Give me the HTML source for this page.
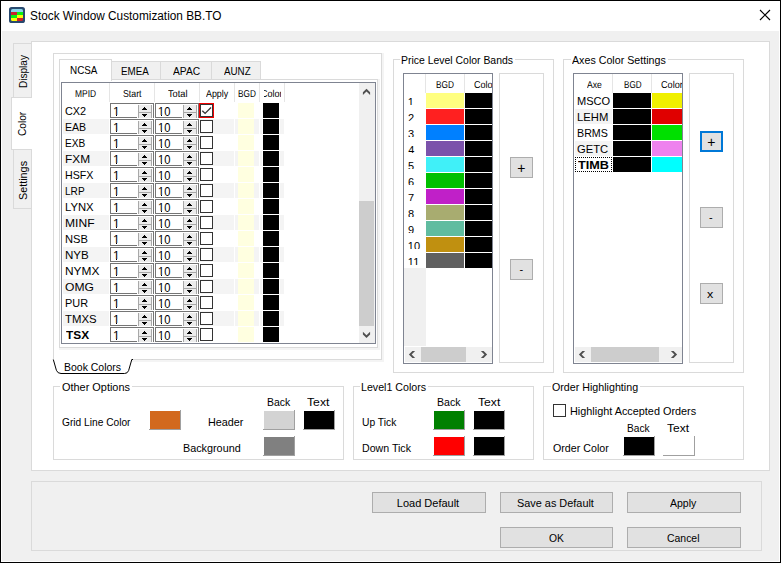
<!DOCTYPE html>
<html lang="en"><head><meta charset="utf-8"><title>Stock Window Customization BB.TO</title>
<style>
html,body{margin:0;padding:0;}
body{width:781px;height:563px;overflow:hidden;position:relative;background:#f0f0f0;font-family:"Liberation Sans",sans-serif;font-size:11px;color:#000;}
div,span,svg{position:absolute;box-sizing:border-box;}
.t{white-space:nowrap;transform-origin:0 0;}
.btn{background:#e1e1e1;border:1px solid #adadad;}
.sw{width:32px;height:20px;background:linear-gradient(#fff,#fff) 0 0/31px 19px no-repeat #a0a0a0;}
.sw i{position:absolute;display:block;left:1px;top:1px;width:30px;height:18px;}
.sp{width:44px;height:15px;background:#fff;border:1px solid #757575;}
.sp i{position:absolute;display:block;box-sizing:border-box;}
.sp .a{left:26px;top:13px;width:16px;height:1px;background:#fff;}
.sp .b{left:27px;top:1px;width:14px;height:13px;background:#ececec;border-left:1px solid #a8a8a8;border-right:1px solid #a8a8a8;}
.sp .c{left:28px;top:8px;width:12px;height:1px;background:#a8a8a8;}
.sp svg{left:30px;top:3px;}
.cb{width:13px;height:13px;background:#fff;border:1px solid #333;}
.v{font-size:12px;line-height:14px;}
.ft{height:1px;background:#fff;}
</style></head><body>

<div style="left:0px;top:0px;width:781px;height:563px;background:#000;"></div>
<div style="left:1px;top:1px;width:779px;height:561px;background:#fff;"></div>
<div style="left:2px;top:31px;width:777px;height:530px;background:#f0f0f0;"></div>
<svg style="left:9px;top:7px" width="16" height="16" viewBox="0 0 16 16">
<defs><clipPath id="ic"><rect x="2" y="2" width="12" height="12" rx="1.6"/></clipPath></defs>
<rect x="0" y="0" width="16" height="16" rx="2.6" fill="#28496f"/>
<g clip-path="url(#ic)">
<rect x="2" y="2" width="12" height="3" fill="#8ad3ea"/>
<rect x="2" y="5" width="6" height="3" fill="#cc2229"/><rect x="8" y="5" width="6" height="3" fill="#0cf014"/>
<rect x="2" y="8" width="6" height="3" fill="#08f510"/><rect x="8" y="8" width="6" height="3" fill="#fbfb08"/>
<rect x="2" y="11" width="6" height="3" fill="#fbfb08"/><rect x="8" y="11" width="6" height="3" fill="#cc2229"/>
</g></svg>
<div class="t" style="left:29.71px;top:9px;font-size:12px;line-height:14px;transform:scaleX(0.984);">Stock Window Customization BB.TO</div>
<svg style="left:759px;top:9px" width="12" height="12" viewBox="0 0 12 12"><path d="M1 1 L11 11 M11 1 L1 11" stroke="#000" stroke-width="1.15" fill="none"/></svg>
<div style="left:31px;top:41px;width:739px;height:430px;background:#fff;border:1px solid #dadada;"></div>
<div style="left:13px;top:43px;width:19px;height:55px;background:#f0f0f0;border:1px solid #dadada;"></div>
<div style="left:13px;top:149px;width:19px;height:60px;background:#f0f0f0;border:1px solid #dadada;"></div>
<div style="left:11px;top:97px;width:21px;height:53px;background:#fff;border:1px solid #dadada;border-right:none;"></div>
<div class="t" style="left:17px;top:87.81px;font-size:11px;line-height:13px;transform:rotate(-90deg) scaleX(0.914);">Display</div>
<div class="t" style="left:16px;top:136.26px;font-size:11px;line-height:13px;transform:rotate(-90deg) scaleX(0.92);">Color</div>
<div class="t" style="left:17px;top:199.59px;font-size:11px;line-height:13px;transform:rotate(-90deg) scaleX(0.982);">Settings</div>
<div style="left:53px;top:53px;width:331px;height:309px;background:#f4f4f4;"></div>
<div style="left:53px;top:53px;width:329px;height:307px;background:#fff;border:1px solid #dadada;"></div>
<div style="left:59px;top:79px;width:321px;height:271px;background:#f4f4f4;"></div>
<div style="left:59px;top:79px;width:319px;height:269px;background:#fff;border:1px solid #dadada;"></div>
<div style="left:111px;top:61px;width:50px;height:19px;background:#f0f0f0;border:1px solid #dadada;"></div>
<div class="t" style="left:120.51px;top:65px;font-size:11px;line-height:13px;transform:scaleX(0.893);">EMEA</div>
<div style="left:160px;top:61px;width:52px;height:19px;background:#f0f0f0;border:1px solid #dadada;"></div>
<div class="t" style="left:172.6px;top:65px;font-size:11px;line-height:13px;transform:scaleX(0.932);">APAC</div>
<div style="left:211px;top:61px;width:50px;height:19px;background:#f0f0f0;border:1px solid #dadada;"></div>
<div class="t" style="left:223.6px;top:65px;font-size:11px;line-height:13px;transform:scaleX(0.891);">AUNZ</div>
<div style="left:59px;top:59px;width:53px;height:22px;background:#fff;border:1px solid #dadada;border-bottom:none;"></div>
<div class="t" style="left:69.6px;top:64px;font-size:11px;line-height:13px;transform:scaleX(0.898);">NCSA</div>
<div style="left:61px;top:82px;width:315px;height:262px;background:#fff;border:1px solid #7f8491;"></div>
<div style="left:109px;top:83px;width:1px;height:19px;background:#e5e5e5;"></div>
<div style="left:154px;top:83px;width:1px;height:19px;background:#e5e5e5;"></div>
<div style="left:199px;top:83px;width:1px;height:19px;background:#e5e5e5;"></div>
<div style="left:234px;top:83px;width:1px;height:19px;background:#e5e5e5;"></div>
<div style="left:259px;top:83px;width:1px;height:19px;background:#e5e5e5;"></div>
<div style="left:284px;top:83px;width:1px;height:19px;background:#e5e5e5;"></div>
<div class="t" style="left:75.17px;top:89px;font-size:10px;line-height:12px;text-rendering:geometricPrecision;transform:scaleX(0.842);">MPID</div>
<div class="t" style="left:123.16px;top:89px;font-size:10px;line-height:12px;text-rendering:geometricPrecision;transform:scaleX(0.878);">Start</div>
<div class="t" style="left:168.17px;top:89px;font-size:10px;line-height:12px;text-rendering:geometricPrecision;transform:scaleX(0.923);">Total</div>
<div class="t" style="left:206px;top:89px;font-size:10px;line-height:12px;text-rendering:geometricPrecision;transform:scaleX(0.888);">Apply</div>
<div class="t" style="left:238.48px;top:89px;font-size:10px;line-height:12px;text-rendering:geometricPrecision;transform:scaleX(0.824);">BGD</div>
<div style="left:263.5px;top:83px;width:17.3px;height:19px;overflow:hidden;">
<div class="t" style="left:-2.45px;top:6px;font-size:10px;line-height:12px;text-rendering:geometricPrecision;transform:scaleX(0.903);">Color</div></div>
<div class="t" style="left:65.01px;top:105px;font-size:11px;line-height:13px;transform:scaleX(0.988);">CX2</div>
<div class="sp" style="left:110px;top:103px"><i class="a"></i><i class="b"></i><i class="c"></i><svg width="7" height="10" viewBox="0 0 7 10" shape-rendering="crispEdges"><path d="M3 0h1v1h1v1h1v1h-5v-1h1v-1h1z M1 7h5v1h-1v1h-1v1h-1v-1h-1v-1h-1z" fill="#000"/></svg></div>
<div class="t v" style="left:113.0px;top:105px">1</div>
<div class="ft" style="left:112px;top:115px;width:4px"></div><div class="ft" style="left:117px;top:115px;width:3px"></div>
<div class="sp" style="left:155px;top:103px"><i class="a"></i><i class="b"></i><i class="c"></i><svg width="7" height="10" viewBox="0 0 7 10" shape-rendering="crispEdges"><path d="M3 0h1v1h1v1h1v1h-5v-1h1v-1h1z M1 7h5v1h-1v1h-1v1h-1v-1h-1v-1h-1z" fill="#000"/></svg></div>
<div class="t v" style="left:158.0px;top:105px;transform:scaleX(0.93)">10</div>
<div class="ft" style="left:157px;top:115px;width:4px"></div><div class="ft" style="left:162px;top:115px;width:2px"></div>
<div style="left:199px;top:103px;width:15px;height:15px;background:#fff;border:1px solid #f00000;"></div>
<div style="left:200px;top:104px;width:13px;height:13px;background:#fff;border:1px solid #333;"></div>
<svg style="left:201px;top:105px" width="11" height="11" viewBox="0 0 11 11"><path d="M1.3 5.7 L4.1 8.4 L10 2.5" stroke="#333" stroke-width="1.3" fill="none"/></svg>
<div style="left:238px;top:103px;width:16px;height:15px;background:#ffffe0;"></div>
<div style="left:262px;top:103px;width:18px;height:15px;background:#fff;"></div>
<div style="left:263px;top:103px;width:16px;height:15px;background:#000;"></div>
<div style="left:63px;top:119px;width:46px;height:15px;background:#f4f4f4;"></div>
<div style="left:200px;top:119px;width:34px;height:15px;background:#f4f4f4;"></div>
<div style="left:235px;top:119px;width:24px;height:15px;background:#f4f4f4;"></div>
<div style="left:260px;top:119px;width:24px;height:15px;background:#f4f4f4;"></div>
<div class="t" style="left:64.54px;top:121px;font-size:11px;line-height:13px;transform:scaleX(0.961);">EAB</div>
<div class="sp" style="left:110px;top:119px"><i class="a"></i><i class="b"></i><i class="c"></i><svg width="7" height="10" viewBox="0 0 7 10" shape-rendering="crispEdges"><path d="M3 0h1v1h1v1h1v1h-5v-1h1v-1h1z M1 7h5v1h-1v1h-1v1h-1v-1h-1v-1h-1z" fill="#000"/></svg></div>
<div class="t v" style="left:113.0px;top:121px">1</div>
<div class="ft" style="left:112px;top:131px;width:4px"></div><div class="ft" style="left:117px;top:131px;width:3px"></div>
<div class="sp" style="left:155px;top:119px"><i class="a"></i><i class="b"></i><i class="c"></i><svg width="7" height="10" viewBox="0 0 7 10" shape-rendering="crispEdges"><path d="M3 0h1v1h1v1h1v1h-5v-1h1v-1h1z M1 7h5v1h-1v1h-1v1h-1v-1h-1v-1h-1z" fill="#000"/></svg></div>
<div class="t v" style="left:158.0px;top:121px;transform:scaleX(0.93)">10</div>
<div class="ft" style="left:157px;top:131px;width:4px"></div><div class="ft" style="left:162px;top:131px;width:2px"></div>
<div class="cb" style="left:200px;top:120px"></div>
<div style="left:238px;top:119px;width:16px;height:15px;background:#ffffe0;"></div>
<div style="left:262px;top:119px;width:18px;height:15px;background:#fff;"></div>
<div style="left:263px;top:119px;width:16px;height:15px;background:#000;"></div>
<div class="t" style="left:64.58px;top:137px;font-size:11px;line-height:13px;transform:scaleX(0.922);">EXB</div>
<div class="sp" style="left:110px;top:135px"><i class="a"></i><i class="b"></i><i class="c"></i><svg width="7" height="10" viewBox="0 0 7 10" shape-rendering="crispEdges"><path d="M3 0h1v1h1v1h1v1h-5v-1h1v-1h1z M1 7h5v1h-1v1h-1v1h-1v-1h-1v-1h-1z" fill="#000"/></svg></div>
<div class="t v" style="left:113.0px;top:137px">1</div>
<div class="ft" style="left:112px;top:147px;width:4px"></div><div class="ft" style="left:117px;top:147px;width:3px"></div>
<div class="sp" style="left:155px;top:135px"><i class="a"></i><i class="b"></i><i class="c"></i><svg width="7" height="10" viewBox="0 0 7 10" shape-rendering="crispEdges"><path d="M3 0h1v1h1v1h1v1h-5v-1h1v-1h1z M1 7h5v1h-1v1h-1v1h-1v-1h-1v-1h-1z" fill="#000"/></svg></div>
<div class="t v" style="left:158.0px;top:137px;transform:scaleX(0.93)">10</div>
<div class="ft" style="left:157px;top:147px;width:4px"></div><div class="ft" style="left:162px;top:147px;width:2px"></div>
<div class="cb" style="left:200px;top:136px"></div>
<div style="left:238px;top:135px;width:16px;height:15px;background:#ffffe0;"></div>
<div style="left:262px;top:135px;width:18px;height:15px;background:#fff;"></div>
<div style="left:263px;top:135px;width:16px;height:15px;background:#000;"></div>
<div style="left:63px;top:151px;width:46px;height:15px;background:#f4f4f4;"></div>
<div style="left:200px;top:151px;width:34px;height:15px;background:#f4f4f4;"></div>
<div style="left:235px;top:151px;width:24px;height:15px;background:#f4f4f4;"></div>
<div style="left:260px;top:151px;width:24px;height:15px;background:#f4f4f4;"></div>
<div class="t" style="left:64.62px;top:153px;font-size:11px;line-height:13px;transform:scaleX(1.078);">FXM</div>
<div class="sp" style="left:110px;top:151px"><i class="a"></i><i class="b"></i><i class="c"></i><svg width="7" height="10" viewBox="0 0 7 10" shape-rendering="crispEdges"><path d="M3 0h1v1h1v1h1v1h-5v-1h1v-1h1z M1 7h5v1h-1v1h-1v1h-1v-1h-1v-1h-1z" fill="#000"/></svg></div>
<div class="t v" style="left:113.0px;top:153px">1</div>
<div class="ft" style="left:112px;top:163px;width:4px"></div><div class="ft" style="left:117px;top:163px;width:3px"></div>
<div class="sp" style="left:155px;top:151px"><i class="a"></i><i class="b"></i><i class="c"></i><svg width="7" height="10" viewBox="0 0 7 10" shape-rendering="crispEdges"><path d="M3 0h1v1h1v1h1v1h-5v-1h1v-1h1z M1 7h5v1h-1v1h-1v1h-1v-1h-1v-1h-1z" fill="#000"/></svg></div>
<div class="t v" style="left:158.0px;top:153px;transform:scaleX(0.93)">10</div>
<div class="ft" style="left:157px;top:163px;width:4px"></div><div class="ft" style="left:162px;top:163px;width:2px"></div>
<div class="cb" style="left:200px;top:152px"></div>
<div style="left:238px;top:151px;width:16px;height:15px;background:#ffffe0;"></div>
<div style="left:262px;top:151px;width:18px;height:15px;background:#fff;"></div>
<div style="left:263px;top:151px;width:16px;height:15px;background:#000;"></div>
<div class="t" style="left:64.53px;top:169px;font-size:11px;line-height:13px;transform:scaleX(0.971);">HSFX</div>
<div class="sp" style="left:110px;top:167px"><i class="a"></i><i class="b"></i><i class="c"></i><svg width="7" height="10" viewBox="0 0 7 10" shape-rendering="crispEdges"><path d="M3 0h1v1h1v1h1v1h-5v-1h1v-1h1z M1 7h5v1h-1v1h-1v1h-1v-1h-1v-1h-1z" fill="#000"/></svg></div>
<div class="t v" style="left:113.0px;top:169px">1</div>
<div class="ft" style="left:112px;top:179px;width:4px"></div><div class="ft" style="left:117px;top:179px;width:3px"></div>
<div class="sp" style="left:155px;top:167px"><i class="a"></i><i class="b"></i><i class="c"></i><svg width="7" height="10" viewBox="0 0 7 10" shape-rendering="crispEdges"><path d="M3 0h1v1h1v1h1v1h-5v-1h1v-1h1z M1 7h5v1h-1v1h-1v1h-1v-1h-1v-1h-1z" fill="#000"/></svg></div>
<div class="t v" style="left:158.0px;top:169px;transform:scaleX(0.93)">10</div>
<div class="ft" style="left:157px;top:179px;width:4px"></div><div class="ft" style="left:162px;top:179px;width:2px"></div>
<div class="cb" style="left:200px;top:168px"></div>
<div style="left:238px;top:167px;width:16px;height:15px;background:#ffffe0;"></div>
<div style="left:262px;top:167px;width:18px;height:15px;background:#fff;"></div>
<div style="left:263px;top:167px;width:16px;height:15px;background:#000;"></div>
<div style="left:63px;top:183px;width:46px;height:15px;background:#f4f4f4;"></div>
<div style="left:200px;top:183px;width:34px;height:15px;background:#f4f4f4;"></div>
<div style="left:235px;top:183px;width:24px;height:15px;background:#f4f4f4;"></div>
<div style="left:260px;top:183px;width:24px;height:15px;background:#f4f4f4;"></div>
<div class="t" style="left:64.58px;top:185px;font-size:11px;line-height:13px;transform:scaleX(0.916);">LRP</div>
<div class="sp" style="left:110px;top:183px"><i class="a"></i><i class="b"></i><i class="c"></i><svg width="7" height="10" viewBox="0 0 7 10" shape-rendering="crispEdges"><path d="M3 0h1v1h1v1h1v1h-5v-1h1v-1h1z M1 7h5v1h-1v1h-1v1h-1v-1h-1v-1h-1z" fill="#000"/></svg></div>
<div class="t v" style="left:113.0px;top:185px">1</div>
<div class="ft" style="left:112px;top:195px;width:4px"></div><div class="ft" style="left:117px;top:195px;width:3px"></div>
<div class="sp" style="left:155px;top:183px"><i class="a"></i><i class="b"></i><i class="c"></i><svg width="7" height="10" viewBox="0 0 7 10" shape-rendering="crispEdges"><path d="M3 0h1v1h1v1h1v1h-5v-1h1v-1h1z M1 7h5v1h-1v1h-1v1h-1v-1h-1v-1h-1z" fill="#000"/></svg></div>
<div class="t v" style="left:158.0px;top:185px;transform:scaleX(0.93)">10</div>
<div class="ft" style="left:157px;top:195px;width:4px"></div><div class="ft" style="left:162px;top:195px;width:2px"></div>
<div class="cb" style="left:200px;top:184px"></div>
<div style="left:238px;top:183px;width:16px;height:15px;background:#ffffe0;"></div>
<div style="left:262px;top:183px;width:18px;height:15px;background:#fff;"></div>
<div style="left:263px;top:183px;width:16px;height:15px;background:#000;"></div>
<div class="t" style="left:64.67px;top:201px;font-size:11px;line-height:13px;transform:scaleX(1.026);">LYNX</div>
<div class="sp" style="left:110px;top:199px"><i class="a"></i><i class="b"></i><i class="c"></i><svg width="7" height="10" viewBox="0 0 7 10" shape-rendering="crispEdges"><path d="M3 0h1v1h1v1h1v1h-5v-1h1v-1h1z M1 7h5v1h-1v1h-1v1h-1v-1h-1v-1h-1z" fill="#000"/></svg></div>
<div class="t v" style="left:113.0px;top:201px">1</div>
<div class="ft" style="left:112px;top:211px;width:4px"></div><div class="ft" style="left:117px;top:211px;width:3px"></div>
<div class="sp" style="left:155px;top:199px"><i class="a"></i><i class="b"></i><i class="c"></i><svg width="7" height="10" viewBox="0 0 7 10" shape-rendering="crispEdges"><path d="M3 0h1v1h1v1h1v1h-5v-1h1v-1h1z M1 7h5v1h-1v1h-1v1h-1v-1h-1v-1h-1z" fill="#000"/></svg></div>
<div class="t v" style="left:158.0px;top:201px;transform:scaleX(0.93)">10</div>
<div class="ft" style="left:157px;top:211px;width:4px"></div><div class="ft" style="left:162px;top:211px;width:2px"></div>
<div class="cb" style="left:200px;top:200px"></div>
<div style="left:238px;top:199px;width:16px;height:15px;background:#ffffe0;"></div>
<div style="left:262px;top:199px;width:18px;height:15px;background:#fff;"></div>
<div style="left:263px;top:199px;width:16px;height:15px;background:#000;"></div>
<div style="left:63px;top:215px;width:46px;height:15px;background:#f4f4f4;"></div>
<div style="left:200px;top:215px;width:34px;height:15px;background:#f4f4f4;"></div>
<div style="left:235px;top:215px;width:24px;height:15px;background:#f4f4f4;"></div>
<div style="left:260px;top:215px;width:24px;height:15px;background:#f4f4f4;"></div>
<div class="t" style="left:64.6px;top:217px;font-size:11px;line-height:13px;transform:scaleX(1.098);">MINF</div>
<div class="sp" style="left:110px;top:215px"><i class="a"></i><i class="b"></i><i class="c"></i><svg width="7" height="10" viewBox="0 0 7 10" shape-rendering="crispEdges"><path d="M3 0h1v1h1v1h1v1h-5v-1h1v-1h1z M1 7h5v1h-1v1h-1v1h-1v-1h-1v-1h-1z" fill="#000"/></svg></div>
<div class="t v" style="left:113.0px;top:217px">1</div>
<div class="ft" style="left:112px;top:227px;width:4px"></div><div class="ft" style="left:117px;top:227px;width:3px"></div>
<div class="sp" style="left:155px;top:215px"><i class="a"></i><i class="b"></i><i class="c"></i><svg width="7" height="10" viewBox="0 0 7 10" shape-rendering="crispEdges"><path d="M3 0h1v1h1v1h1v1h-5v-1h1v-1h1z M1 7h5v1h-1v1h-1v1h-1v-1h-1v-1h-1z" fill="#000"/></svg></div>
<div class="t v" style="left:158.0px;top:217px;transform:scaleX(0.93)">10</div>
<div class="ft" style="left:157px;top:227px;width:4px"></div><div class="ft" style="left:162px;top:227px;width:2px"></div>
<div class="cb" style="left:200px;top:216px"></div>
<div style="left:238px;top:215px;width:16px;height:15px;background:#ffffe0;"></div>
<div style="left:262px;top:215px;width:18px;height:15px;background:#fff;"></div>
<div style="left:263px;top:215px;width:16px;height:15px;background:#000;"></div>
<div class="t" style="left:64.69px;top:233px;font-size:11px;line-height:13px;transform:scaleX(1.014);">NSB</div>
<div class="sp" style="left:110px;top:231px"><i class="a"></i><i class="b"></i><i class="c"></i><svg width="7" height="10" viewBox="0 0 7 10" shape-rendering="crispEdges"><path d="M3 0h1v1h1v1h1v1h-5v-1h1v-1h1z M1 7h5v1h-1v1h-1v1h-1v-1h-1v-1h-1z" fill="#000"/></svg></div>
<div class="t v" style="left:113.0px;top:233px">1</div>
<div class="ft" style="left:112px;top:243px;width:4px"></div><div class="ft" style="left:117px;top:243px;width:3px"></div>
<div class="sp" style="left:155px;top:231px"><i class="a"></i><i class="b"></i><i class="c"></i><svg width="7" height="10" viewBox="0 0 7 10" shape-rendering="crispEdges"><path d="M3 0h1v1h1v1h1v1h-5v-1h1v-1h1z M1 7h5v1h-1v1h-1v1h-1v-1h-1v-1h-1z" fill="#000"/></svg></div>
<div class="t v" style="left:158.0px;top:233px;transform:scaleX(0.93)">10</div>
<div class="ft" style="left:157px;top:243px;width:4px"></div><div class="ft" style="left:162px;top:243px;width:2px"></div>
<div class="cb" style="left:200px;top:232px"></div>
<div style="left:238px;top:231px;width:16px;height:15px;background:#ffffe0;"></div>
<div style="left:262px;top:231px;width:18px;height:15px;background:#fff;"></div>
<div style="left:263px;top:231px;width:16px;height:15px;background:#000;"></div>
<div style="left:63px;top:247px;width:46px;height:15px;background:#f4f4f4;"></div>
<div style="left:200px;top:247px;width:34px;height:15px;background:#f4f4f4;"></div>
<div style="left:235px;top:247px;width:24px;height:15px;background:#f4f4f4;"></div>
<div style="left:260px;top:247px;width:24px;height:15px;background:#f4f4f4;"></div>
<div class="t" style="left:64.65px;top:249px;font-size:11px;line-height:13px;transform:scaleX(1.052);">NYB</div>
<div class="sp" style="left:110px;top:247px"><i class="a"></i><i class="b"></i><i class="c"></i><svg width="7" height="10" viewBox="0 0 7 10" shape-rendering="crispEdges"><path d="M3 0h1v1h1v1h1v1h-5v-1h1v-1h1z M1 7h5v1h-1v1h-1v1h-1v-1h-1v-1h-1z" fill="#000"/></svg></div>
<div class="t v" style="left:113.0px;top:249px">1</div>
<div class="ft" style="left:112px;top:259px;width:4px"></div><div class="ft" style="left:117px;top:259px;width:3px"></div>
<div class="sp" style="left:155px;top:247px"><i class="a"></i><i class="b"></i><i class="c"></i><svg width="7" height="10" viewBox="0 0 7 10" shape-rendering="crispEdges"><path d="M3 0h1v1h1v1h1v1h-5v-1h1v-1h1z M1 7h5v1h-1v1h-1v1h-1v-1h-1v-1h-1z" fill="#000"/></svg></div>
<div class="t v" style="left:158.0px;top:249px;transform:scaleX(0.93)">10</div>
<div class="ft" style="left:157px;top:259px;width:4px"></div><div class="ft" style="left:162px;top:259px;width:2px"></div>
<div class="cb" style="left:200px;top:248px"></div>
<div style="left:238px;top:247px;width:16px;height:15px;background:#ffffe0;"></div>
<div style="left:262px;top:247px;width:18px;height:15px;background:#fff;"></div>
<div style="left:263px;top:247px;width:16px;height:15px;background:#000;"></div>
<div class="t" style="left:64.62px;top:265px;font-size:11px;line-height:13px;transform:scaleX(1.082);">NYMX</div>
<div class="sp" style="left:110px;top:263px"><i class="a"></i><i class="b"></i><i class="c"></i><svg width="7" height="10" viewBox="0 0 7 10" shape-rendering="crispEdges"><path d="M3 0h1v1h1v1h1v1h-5v-1h1v-1h1z M1 7h5v1h-1v1h-1v1h-1v-1h-1v-1h-1z" fill="#000"/></svg></div>
<div class="t v" style="left:113.0px;top:265px">1</div>
<div class="ft" style="left:112px;top:275px;width:4px"></div><div class="ft" style="left:117px;top:275px;width:3px"></div>
<div class="sp" style="left:155px;top:263px"><i class="a"></i><i class="b"></i><i class="c"></i><svg width="7" height="10" viewBox="0 0 7 10" shape-rendering="crispEdges"><path d="M3 0h1v1h1v1h1v1h-5v-1h1v-1h1z M1 7h5v1h-1v1h-1v1h-1v-1h-1v-1h-1z" fill="#000"/></svg></div>
<div class="t v" style="left:158.0px;top:265px;transform:scaleX(0.93)">10</div>
<div class="ft" style="left:157px;top:275px;width:4px"></div><div class="ft" style="left:162px;top:275px;width:2px"></div>
<div class="cb" style="left:200px;top:264px"></div>
<div style="left:238px;top:263px;width:16px;height:15px;background:#ffffe0;"></div>
<div style="left:262px;top:263px;width:18px;height:15px;background:#fff;"></div>
<div style="left:263px;top:263px;width:16px;height:15px;background:#000;"></div>
<div style="left:63px;top:279px;width:46px;height:15px;background:#f4f4f4;"></div>
<div style="left:200px;top:279px;width:34px;height:15px;background:#f4f4f4;"></div>
<div style="left:235px;top:279px;width:24px;height:15px;background:#f4f4f4;"></div>
<div style="left:260px;top:279px;width:24px;height:15px;background:#f4f4f4;"></div>
<div class="t" style="left:64.65px;top:281px;font-size:11px;line-height:13px;transform:scaleX(1.1);">OMG</div>
<div class="sp" style="left:110px;top:279px"><i class="a"></i><i class="b"></i><i class="c"></i><svg width="7" height="10" viewBox="0 0 7 10" shape-rendering="crispEdges"><path d="M3 0h1v1h1v1h1v1h-5v-1h1v-1h1z M1 7h5v1h-1v1h-1v1h-1v-1h-1v-1h-1z" fill="#000"/></svg></div>
<div class="t v" style="left:113.0px;top:281px">1</div>
<div class="ft" style="left:112px;top:291px;width:4px"></div><div class="ft" style="left:117px;top:291px;width:3px"></div>
<div class="sp" style="left:155px;top:279px"><i class="a"></i><i class="b"></i><i class="c"></i><svg width="7" height="10" viewBox="0 0 7 10" shape-rendering="crispEdges"><path d="M3 0h1v1h1v1h1v1h-5v-1h1v-1h1z M1 7h5v1h-1v1h-1v1h-1v-1h-1v-1h-1z" fill="#000"/></svg></div>
<div class="t v" style="left:158.0px;top:281px;transform:scaleX(0.93)">10</div>
<div class="ft" style="left:157px;top:291px;width:4px"></div><div class="ft" style="left:162px;top:291px;width:2px"></div>
<div class="cb" style="left:200px;top:280px"></div>
<div style="left:238px;top:279px;width:16px;height:15px;background:#ffffe0;"></div>
<div style="left:262px;top:279px;width:18px;height:15px;background:#fff;"></div>
<div style="left:263px;top:279px;width:16px;height:15px;background:#000;"></div>
<div class="t" style="left:64.51px;top:297px;font-size:11px;line-height:13px;transform:scaleX(0.993);">PUR</div>
<div class="sp" style="left:110px;top:295px"><i class="a"></i><i class="b"></i><i class="c"></i><svg width="7" height="10" viewBox="0 0 7 10" shape-rendering="crispEdges"><path d="M3 0h1v1h1v1h1v1h-5v-1h1v-1h1z M1 7h5v1h-1v1h-1v1h-1v-1h-1v-1h-1z" fill="#000"/></svg></div>
<div class="t v" style="left:113.0px;top:297px">1</div>
<div class="ft" style="left:112px;top:307px;width:4px"></div><div class="ft" style="left:117px;top:307px;width:3px"></div>
<div class="sp" style="left:155px;top:295px"><i class="a"></i><i class="b"></i><i class="c"></i><svg width="7" height="10" viewBox="0 0 7 10" shape-rendering="crispEdges"><path d="M3 0h1v1h1v1h1v1h-5v-1h1v-1h1z M1 7h5v1h-1v1h-1v1h-1v-1h-1v-1h-1z" fill="#000"/></svg></div>
<div class="t v" style="left:158.0px;top:297px;transform:scaleX(0.93)">10</div>
<div class="ft" style="left:157px;top:307px;width:4px"></div><div class="ft" style="left:162px;top:307px;width:2px"></div>
<div class="cb" style="left:200px;top:296px"></div>
<div style="left:238px;top:295px;width:16px;height:15px;background:#ffffe0;"></div>
<div style="left:262px;top:295px;width:18px;height:15px;background:#fff;"></div>
<div style="left:263px;top:295px;width:16px;height:15px;background:#000;"></div>
<div style="left:63px;top:311px;width:46px;height:15px;background:#f4f4f4;"></div>
<div style="left:200px;top:311px;width:34px;height:15px;background:#f4f4f4;"></div>
<div style="left:235px;top:311px;width:24px;height:15px;background:#f4f4f4;"></div>
<div style="left:260px;top:311px;width:24px;height:15px;background:#f4f4f4;"></div>
<div class="t" style="left:64.94px;top:313px;font-size:11px;line-height:13px;transform:scaleX(1.032);">TMXS</div>
<div class="sp" style="left:110px;top:311px"><i class="a"></i><i class="b"></i><i class="c"></i><svg width="7" height="10" viewBox="0 0 7 10" shape-rendering="crispEdges"><path d="M3 0h1v1h1v1h1v1h-5v-1h1v-1h1z M1 7h5v1h-1v1h-1v1h-1v-1h-1v-1h-1z" fill="#000"/></svg></div>
<div class="t v" style="left:113.0px;top:313px">1</div>
<div class="ft" style="left:112px;top:323px;width:4px"></div><div class="ft" style="left:117px;top:323px;width:3px"></div>
<div class="sp" style="left:155px;top:311px"><i class="a"></i><i class="b"></i><i class="c"></i><svg width="7" height="10" viewBox="0 0 7 10" shape-rendering="crispEdges"><path d="M3 0h1v1h1v1h1v1h-5v-1h1v-1h1z M1 7h5v1h-1v1h-1v1h-1v-1h-1v-1h-1z" fill="#000"/></svg></div>
<div class="t v" style="left:158.0px;top:313px;transform:scaleX(0.93)">10</div>
<div class="ft" style="left:157px;top:323px;width:4px"></div><div class="ft" style="left:162px;top:323px;width:2px"></div>
<div class="cb" style="left:200px;top:312px"></div>
<div style="left:238px;top:311px;width:16px;height:15px;background:#ffffe0;"></div>
<div style="left:262px;top:311px;width:18px;height:15px;background:#fff;"></div>
<div style="left:263px;top:311px;width:16px;height:15px;background:#000;"></div>
<div class="t" style="left:65.5px;top:329px;font-size:11px;line-height:13px;font-weight:bold;transform:scaleX(1.078);">TSX</div>
<div class="sp" style="left:110px;top:327px"><i class="a"></i><i class="b"></i><i class="c"></i><svg width="7" height="10" viewBox="0 0 7 10" shape-rendering="crispEdges"><path d="M3 0h1v1h1v1h1v1h-5v-1h1v-1h1z M1 7h5v1h-1v1h-1v1h-1v-1h-1v-1h-1z" fill="#000"/></svg></div>
<div class="t v" style="left:113.0px;top:329px">1</div>
<div class="ft" style="left:112px;top:339px;width:4px"></div><div class="ft" style="left:117px;top:339px;width:3px"></div>
<div class="sp" style="left:155px;top:327px"><i class="a"></i><i class="b"></i><i class="c"></i><svg width="7" height="10" viewBox="0 0 7 10" shape-rendering="crispEdges"><path d="M3 0h1v1h1v1h1v1h-5v-1h1v-1h1z M1 7h5v1h-1v1h-1v1h-1v-1h-1v-1h-1z" fill="#000"/></svg></div>
<div class="t v" style="left:158.0px;top:329px;transform:scaleX(0.93)">10</div>
<div class="ft" style="left:157px;top:339px;width:4px"></div><div class="ft" style="left:162px;top:339px;width:2px"></div>
<div class="cb" style="left:200px;top:328px"></div>
<div style="left:238px;top:327px;width:16px;height:15px;background:#ffffe0;"></div>
<div style="left:262px;top:327px;width:18px;height:15px;background:#fff;"></div>
<div style="left:263px;top:327px;width:16px;height:15px;background:#000;"></div>
<div style="left:359px;top:83px;width:16px;height:260px;background:#f0f0f0;"></div>
<div style="left:359px;top:201px;width:15px;height:125px;background:#cdcdcd;"></div>
<svg style="left:361px;top:86px" width="10" height="10" viewBox="0 0 10 10"><polygon points="5.5,2.8 1.9,6.3 1.9,9 5.5,5.5 9.1,9 9.1,6.3" fill="#505050"/></svg>
<svg style="left:361px;top:329px" width="10" height="10" viewBox="0 0 10 10"><polygon points="5.5,9 1.9,5.5 1.9,2.8 5.5,6.3 9.1,2.8 9.1,5.5" fill="#505050"/></svg>
<svg style="left:50px;top:357px" width="90" height="20" viewBox="0 0 90 20"><path d="M4 1.5 L3.3 2.5 L6.4 13.3 Q7.6 16.5 11 16.5 L74.5 16.5 Q77.6 16.5 78.6 13.6 L81.8 2.5 L81.8 1.5 Z" fill="#fff" stroke="none"/><path d="M3.3 2.5 L6.4 13.3 Q7.6 16.5 11 16.5 L74.5 16.5 Q77.6 16.5 78.6 13.6 L81.8 2.5 L83 2.5" fill="none" stroke="#000" stroke-width="1"/></svg>
<div class="t" style="left:63.65px;top:361px;font-size:11px;line-height:13px;transform:scaleX(0.952);">Book Colors</div>
<div style="left:393px;top:59px;width:161px;height:314px;border:1px solid #dadada;"></div>
<div style="left:400px;top:59px;width:115px;height:1px;background:#fff;"></div>
<div class="t" style="left:400.65px;top:54px;font-size:11px;line-height:13px;transform:scaleX(0.949);">Price Level Color Bands</div>
<div style="left:563px;top:59px;width:181px;height:314px;border:1px solid #dadada;"></div>
<div style="left:571px;top:59px;width:97px;height:1px;background:#fff;"></div>
<div class="t" style="left:572px;top:54px;font-size:11px;line-height:13px;transform:scaleX(0.971);">Axes Color Settings</div>
<div style="left:53px;top:386px;width:291px;height:74px;border:1px solid #dadada;"></div>
<div style="left:60px;top:386px;width:72px;height:1px;background:#fff;"></div>
<div class="t" style="left:61.6px;top:381px;font-size:11px;line-height:13px;transform:scaleX(0.992);">Other Options</div>
<div style="left:353px;top:386px;width:181px;height:74px;border:1px solid #dadada;"></div>
<div style="left:360px;top:386px;width:68px;height:1px;background:#fff;"></div>
<div class="t" style="left:360.53px;top:381px;font-size:11px;line-height:13px;transform:scaleX(0.968);">Level1 Colors</div>
<div style="left:543px;top:386px;width:201px;height:74px;border:1px solid #dadada;"></div>
<div style="left:551px;top:386px;width:89px;height:1px;background:#fff;"></div>
<div class="t" style="left:551.61px;top:381px;font-size:11px;line-height:13px;transform:scaleX(0.971);">Order Highlighting</div>
<div style="left:403px;top:73px;width:90px;height:291px;background:#fff;border:1px solid #7f8491;"></div>
<div style="left:404px;top:268px;width:22px;height:78px;background:#f0f0f0;"></div>
<div style="left:425px;top:74px;width:1px;height:19px;background:#e5e5e5;"></div>
<div style="left:464px;top:74px;width:1px;height:19px;background:#e5e5e5;"></div>
<div class="t" style="left:436.38px;top:80px;font-size:10px;line-height:12px;text-rendering:geometricPrecision;transform:scaleX(0.829);">BGD</div>
<div style="left:465px;top:74px;width:27px;height:19px;overflow:hidden;">
<div class="t" style="left:8.65px;top:6px;font-size:10px;line-height:12px;text-rendering:geometricPrecision;transform:scaleX(0.903);">Color</div></div>
<div style="left:404px;top:93px;width:22px;height:12px;overflow:hidden;"><div class="t" style="left:3.85px;top:3px;font-size:11px;line-height:13px;">1</div></div>
<div style="left:426px;top:93px;width:38px;height:15px;background:#ffff80;"></div>
<div style="left:465px;top:93px;width:27px;height:15px;background:#000;"></div>
<div style="left:404px;top:109px;width:22px;height:12px;overflow:hidden;"><div class="t" style="left:4.1px;top:3px;font-size:11px;line-height:13px;">2</div></div>
<div style="left:426px;top:109px;width:38px;height:15px;background:#ff2020;"></div>
<div style="left:465px;top:109px;width:27px;height:15px;background:#000;"></div>
<div style="left:404px;top:125px;width:22px;height:12px;overflow:hidden;"><div class="t" style="left:4.1px;top:3px;font-size:11px;line-height:13px;">3</div></div>
<div style="left:426px;top:125px;width:38px;height:15px;background:#0080ff;"></div>
<div style="left:465px;top:125px;width:27px;height:15px;background:#000;"></div>
<div style="left:404px;top:141px;width:22px;height:12px;overflow:hidden;"><div class="t" style="left:4.35px;top:3px;font-size:11px;line-height:13px;">4</div></div>
<div style="left:426px;top:141px;width:38px;height:15px;background:#7b52ab;"></div>
<div style="left:465px;top:141px;width:27px;height:15px;background:#000;"></div>
<div style="left:404px;top:157px;width:22px;height:12px;overflow:hidden;"><div class="t" style="left:4.1px;top:3px;font-size:11px;line-height:13px;">5</div></div>
<div style="left:426px;top:157px;width:38px;height:15px;background:#40f0f8;"></div>
<div style="left:465px;top:157px;width:27px;height:15px;background:#000;"></div>
<div style="left:404px;top:173px;width:22px;height:12px;overflow:hidden;"><div class="t" style="left:4.1px;top:3px;font-size:11px;line-height:13px;">6</div></div>
<div style="left:426px;top:173px;width:38px;height:15px;background:#00c000;"></div>
<div style="left:465px;top:173px;width:27px;height:15px;background:#000;"></div>
<div style="left:404px;top:189px;width:22px;height:12px;overflow:hidden;"><div class="t" style="left:4.1px;top:3px;font-size:11px;line-height:13px;">7</div></div>
<div style="left:426px;top:189px;width:38px;height:15px;background:#c020c8;"></div>
<div style="left:465px;top:189px;width:27px;height:15px;background:#000;"></div>
<div style="left:404px;top:205px;width:22px;height:12px;overflow:hidden;"><div class="t" style="left:4.1px;top:3px;font-size:11px;line-height:13px;">8</div></div>
<div style="left:426px;top:205px;width:38px;height:15px;background:#a8ac70;"></div>
<div style="left:465px;top:205px;width:27px;height:15px;background:#000;"></div>
<div style="left:404px;top:221px;width:22px;height:12px;overflow:hidden;"><div class="t" style="left:4.1px;top:3px;font-size:11px;line-height:13px;">9</div></div>
<div style="left:426px;top:221px;width:38px;height:15px;background:#60bca0;"></div>
<div style="left:465px;top:221px;width:27px;height:15px;background:#000;"></div>
<div style="left:404px;top:237px;width:22px;height:12px;overflow:hidden;"><div class="t" style="left:3.85px;top:3px;font-size:11px;line-height:13px;">10</div></div>
<div style="left:426px;top:237px;width:38px;height:15px;background:#c09010;"></div>
<div style="left:465px;top:237px;width:27px;height:15px;background:#000;"></div>
<div style="left:404px;top:253px;width:22px;height:12px;overflow:hidden;"><div class="t" style="left:3.85px;top:3px;font-size:11px;line-height:13px;">11</div></div>
<div style="left:426px;top:253px;width:38px;height:15px;background:#606060;"></div>
<div style="left:465px;top:253px;width:27px;height:15px;background:#000;"></div>
<div style="left:405px;top:347px;width:87px;height:15px;background:#f0f0f0;"></div>
<div style="left:421px;top:347px;width:45px;height:15px;background:#cdcdcd;"></div>
<svg style="left:407px;top:349px" width="10" height="10" viewBox="0 0 10 10"><polygon points="1.9,5.5 5.4,1.9 8.1,1.9 4.6,5.5 8.1,9.1 5.4,9.1" fill="#505050"/></svg>
<svg style="left:479px;top:349px" width="10" height="10" viewBox="0 0 10 10"><polygon points="8.1,5.5 4.6,1.9 1.9,1.9 5.4,5.5 1.9,9.1 4.6,9.1" fill="#505050"/></svg>
<div style="left:499px;top:73px;width:45px;height:290px;background:#fff;border:1px solid #dadada;"></div>
<div class="btn" style="left:510px;top:157px;width:23px;height:21px;"></div>
<div class="t" style="left:517.27px;top:160px;font-size:14px;line-height:16px;">+</div>
<div class="btn" style="left:510px;top:259px;width:23px;height:21px;"></div>
<div class="t" style="left:519.42px;top:263px;font-size:11px;line-height:13px;">-</div>
<div style="left:573px;top:73px;width:110px;height:291px;background:#fff;border:1px solid #7f8491;"></div>
<div style="left:612px;top:74px;width:1px;height:19px;background:#e5e5e5;"></div>
<div style="left:651px;top:74px;width:1px;height:19px;background:#e5e5e5;"></div>
<div class="t" style="left:586.6px;top:80px;font-size:10px;line-height:12px;text-rendering:geometricPrecision;transform:scaleX(0.866);">Axe</div>
<div class="t" style="left:623.59px;top:80px;font-size:10px;line-height:12px;text-rendering:geometricPrecision;transform:scaleX(0.81);">BGD</div>
<div style="left:652px;top:74px;width:30px;height:19px;overflow:hidden;">
<div class="t" style="left:8.74px;top:6px;font-size:10px;line-height:12px;text-rendering:geometricPrecision;transform:scaleX(0.912);">Color</div></div>
<div class="t" style="left:576.69px;top:95px;font-size:11px;line-height:13px;transform:scaleX(1.006);">MSCO</div>
<div style="left:613px;top:93px;width:38px;height:15px;background:#000;"></div>
<div style="left:652px;top:93px;width:30px;height:15px;background:#f0f000;"></div>
<div style="left:575px;top:109px;width:37px;height:15px;background:#f4f4f4;"></div>
<div class="t" style="left:576.68px;top:111px;font-size:11px;line-height:13px;transform:scaleX(1.023);">LEHM</div>
<div style="left:613px;top:109px;width:38px;height:15px;background:#000;"></div>
<div style="left:652px;top:109px;width:30px;height:15px;background:#e00000;"></div>
<div class="t" style="left:576.53px;top:127px;font-size:11px;line-height:13px;transform:scaleX(0.972);">BRMS</div>
<div style="left:613px;top:125px;width:38px;height:15px;background:#000;"></div>
<div style="left:652px;top:125px;width:30px;height:15px;background:#00e000;"></div>
<div style="left:575px;top:141px;width:37px;height:15px;background:#f4f4f4;"></div>
<div class="t" style="left:576.79px;top:143px;font-size:11px;line-height:13px;transform:scaleX(1.02);">GETC</div>
<div style="left:613px;top:141px;width:38px;height:15px;background:#000;"></div>
<div style="left:652px;top:141px;width:30px;height:15px;background:#ee82ee;"></div>
<div class="t" style="left:577.5px;top:159px;font-size:11px;line-height:13px;font-weight:bold;transform:scaleX(1.151);">TIMB</div>
<div style="left:575px;top:157px;width:37px;height:15px;border:1px dotted #000;"></div>
<div style="left:613px;top:157px;width:38px;height:15px;background:#000;"></div>
<div style="left:652px;top:157px;width:30px;height:15px;background:#00ffff;"></div>
<div style="left:575px;top:347px;width:107px;height:15px;background:#f0f0f0;"></div>
<div style="left:591px;top:347px;width:68px;height:15px;background:#cdcdcd;"></div>
<svg style="left:577px;top:349px" width="10" height="10" viewBox="0 0 10 10"><polygon points="1.9,5.5 5.4,1.9 8.1,1.9 4.6,5.5 8.1,9.1 5.4,9.1" fill="#505050"/></svg>
<svg style="left:669px;top:349px" width="10" height="10" viewBox="0 0 10 10"><polygon points="8.1,5.5 4.6,1.9 1.9,1.9 5.4,5.5 1.9,9.1 4.6,9.1" fill="#505050"/></svg>
<div style="left:689px;top:73px;width:45px;height:290px;background:#fff;border:1px solid #dadada;"></div>
<div class="btn" style="left:700px;top:131px;width:23px;height:21px;border:2px solid #0078d7;"></div>
<div class="t" style="left:707.27px;top:134px;font-size:14px;line-height:16px;">+</div>
<div class="btn" style="left:700px;top:207px;width:23px;height:21px;"></div>
<div class="t" style="left:709.12px;top:211px;font-size:11px;line-height:13px;">-</div>
<div class="btn" style="left:700px;top:283px;width:23px;height:21px;"></div>
<div class="t" style="left:707.42px;top:288px;font-size:11px;line-height:13px;transform:scaleX(1.14);">x</div>
<div class="t" style="left:62.44px;top:416px;font-size:11px;line-height:13px;transform:scaleX(0.926);">Grid Line Color</div>
<div class="sw" style="left:149px;top:410px"><i style="background:#d2691e"></i></div>
<div class="t" style="left:207.52px;top:416px;font-size:11px;line-height:13px;transform:scaleX(0.983);">Header</div>
<div class="t" style="left:182.62px;top:442px;font-size:11px;line-height:13px;transform:scaleX(0.982);">Background</div>
<div class="t" style="left:266.65px;top:396px;font-size:11px;line-height:13px;transform:scaleX(0.949);">Back</div>
<div class="t" style="left:307.22px;top:396px;font-size:11px;line-height:13px;transform:scaleX(1.11);">Text</div>
<div class="sw" style="left:263px;top:410px"><i style="background:#d3d3d3"></i></div>
<div class="sw" style="left:303px;top:410px"><i style="background:#000"></i></div>
<div class="sw" style="left:263px;top:436px"><i style="background:#808080"></i></div>
<div class="t" style="left:362px;top:416px;font-size:11px;line-height:13px;transform:scaleX(0.936);">Up Tick</div>
<div class="t" style="left:361.74px;top:442px;font-size:11px;line-height:13px;transform:scaleX(0.965);">Down Tick</div>
<div class="t" style="left:436.64px;top:396px;font-size:11px;line-height:13px;transform:scaleX(0.962);">Back</div>
<div class="t" style="left:477.52px;top:396px;font-size:11px;line-height:13px;transform:scaleX(1.105);">Text</div>
<div class="sw" style="left:433px;top:410px"><i style="background:#008000"></i></div>
<div class="sw" style="left:473px;top:410px"><i style="background:#000"></i></div>
<div class="sw" style="left:433px;top:436px"><i style="background:#ff0000"></i></div>
<div class="sw" style="left:473px;top:436px"><i style="background:#000"></i></div>
<div class="cb" style="left:553px;top:404px"></div>
<div class="t" style="left:569.61px;top:405px;font-size:11px;line-height:13px;transform:scaleX(0.987);">Highlight Accepted Orders</div>
<div class="t" style="left:626.68px;top:422px;font-size:11px;line-height:13px;transform:scaleX(0.923);">Back</div>
<div class="t" style="left:667.43px;top:422px;font-size:11px;line-height:13px;transform:scaleX(1.09);">Text</div>
<div class="t" style="left:552.61px;top:442px;font-size:11px;line-height:13px;transform:scaleX(0.971);">Order Color</div>
<div class="sw" style="left:623px;top:436px"><i style="background:#000"></i></div>
<div class="sw" style="left:663px;top:436px"><i style="background:#fff"></i></div>
<div style="left:31px;top:481px;width:731px;height:70px;border:1px solid #dadada;"></div>
<div class="btn" style="left:372px;top:492px;width:114px;height:21px;"></div>
<div class="t" style="left:396.8px;top:497px;font-size:11px;line-height:13px;">Load Default</div>
<div class="btn" style="left:500px;top:492px;width:113px;height:21px;"></div>
<div class="t" style="left:517px;top:497px;font-size:11px;line-height:13px;transform:scaleX(0.99);">Save as Default</div>
<div class="btn" style="left:627px;top:492px;width:114px;height:21px;"></div>
<div class="t" style="left:669.9px;top:497px;font-size:11px;line-height:13px;transform:scaleX(0.956);">Apply</div>
<div class="btn" style="left:500px;top:527px;width:113px;height:21px;"></div>
<div class="t" style="left:548.53px;top:532px;font-size:11px;line-height:13px;transform:scaleX(0.938);">OK</div>
<div class="btn" style="left:627px;top:527px;width:114px;height:21px;"></div>
<div class="t" style="left:667.33px;top:532px;font-size:11px;line-height:13px;transform:scaleX(0.948);">Cancel</div>
</body></html>
